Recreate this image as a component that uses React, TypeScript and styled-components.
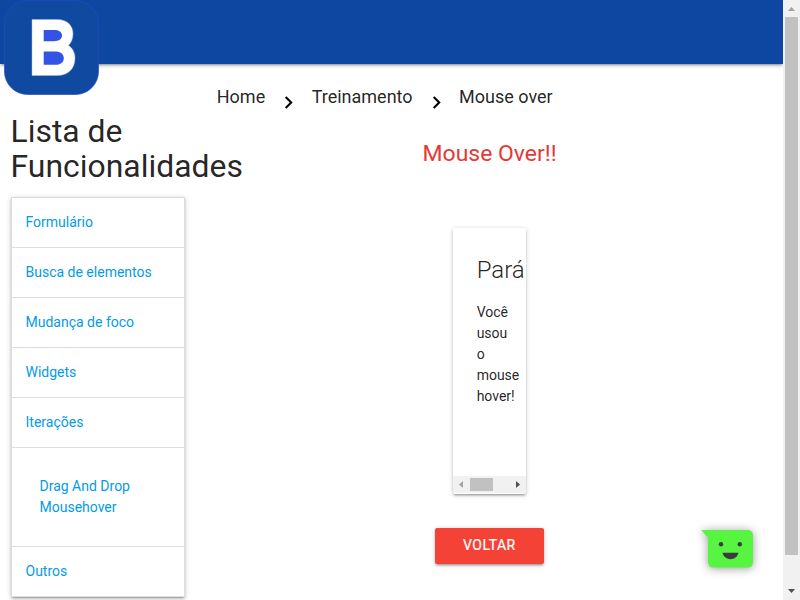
import React from "react";
import styled, { createGlobalStyle } from "styled-components";

const GlobalStyle = createGlobalStyle`
  *, *::before, *::after { box-sizing: border-box; }
  body {
    margin: 0;
    overflow: hidden;
    background: #fff;
    color: rgba(0, 0, 0, 0.87);
    font-family: Roboto, sans-serif;
    font-size: 14px;
    line-height: 1.5;
  }
  h4, h5, p, ul { margin: 0; padding: 0; font-weight: 400; }
  a { color: inherit; text-decoration: none; }
`;

const raised =
  "0 2px 2px 0 rgba(0,0,0,.14), 0 3px 1px -2px rgba(0,0,0,.12), 0 1px 5px 0 rgba(0,0,0,.2)";

const Window = styled.div`
  position: relative;
  display: flex;
  width: 800px;
  height: 600px;
  overflow: hidden;
`;
const Page = styled.div`
  width: 783px;
  height: 600px;
  overflow: hidden;
`;
const NavBar = styled.nav`
  position: relative;
  height: 64px;
  background: #0d47a1;
  box-shadow: ${raised};
`;
const Logo = styled.svg`
  position: absolute;
  left: 4px;
  top: 0;
  display: block;
`;
const Columns = styled.div`
  display: grid;
  grid-template-columns: 195.75px 1fr;
`;
const Sidebar = styled.aside`
  padding: 49.5px 10.5px 0;
`;
const Title = styled.h4`
  width: 260px;
  font-size: 31.92px;
  line-height: 35.1px;
`;
const Collapsible = styled.ul`
  list-style: none;
  margin-top: 13px;
  border: 1px solid #ddd;
  border-bottom: 0;
  box-shadow: ${raised};
  color: #039be5;
`;
const Item = styled.li<{ $open?: boolean }>`
  display: flex;
  flex-direction: column;
  padding: ${(p) => (p.$open ? 28 : 14)}px;
  border-bottom: 1px solid #ddd;
`;
const Main = styled.main`
  display: flex;
  flex-direction: column;
  align-items: center;
`;
const Breadcrumbs = styled.nav`
  display: flex;
  align-self: flex-start;
  align-items: flex-start;
  margin-left: 21px;
  height: 64px;
  padding-top: 19px;
  font-size: 18px;
  line-height: 27px;
`;
const Chevron = styled.svg`
  width: 25px;
  height: 25px;
  margin: 7px 10.2px 0 11.3px;
  fill: #000;
`;
const Heading = styled.h5`
  margin-top: 12.5px;
  padding-left: 0.4px;
  color: #e53935;
  font-size: 22.96px;
  line-height: 25.3px;
`;
const Card = styled.section`
  display: flex;
  flex-direction: column;
  width: 73px;
  height: 266px;
  margin: 62px 0 0 0.75px;
  border-radius: 2px;
  background: #fff;
  overflow: hidden;
  box-shadow: ${raised};
`;
const CardBody = styled.div`
  flex: 1;
  padding: 24px 0 0 23.4px;
`;
const CardTitle = styled.h5`
  margin-bottom: 14px;
  font-size: 24px;
  font-weight: 300;
  line-height: 36px;
`;
const CardText = styled.p`
  width: 26px;
`;
const HorizontalBar = styled.div`
  display: flex;
  align-items: center;
  height: 17px;
  margin-bottom: 1px;
  background: #f1f1f1;
`;
const Thumb = styled.div<{ $w: number; $h: number }>`
  width: ${(p) => p.$w}px;
  height: ${(p) => p.$h}px;
  background: #c1c1c1;
`;
const Arrow = styled.svg`
  display: block;
  flex: none;
  width: 17px;
  height: 17px;
`;
const EndArrow = styled(Arrow)`
  margin-left: auto;
`;
const Button = styled.a`
  height: 36px;
  margin-top: 34px;
  padding: 0 28px;
  border-radius: 2px;
  background: #f44336;
  color: #fff;
  letter-spacing: 0.5px;
  line-height: 35px;
  -webkit-text-stroke: 0.2px #fff;
  box-shadow: ${raised};
`;
const VerticalBar = styled.div`
  display: flex;
  flex-direction: column;
  align-items: center;
  justify-content: space-between;
  width: 17px;
  height: 600px;
  background: #f1f1f1;
`;
const Track = styled.div`
  flex: 1;
`;
const ChatBubble = styled.svg`
  position: absolute;
  left: 690px;
  top: 515px;
  overflow: visible;
  filter: drop-shadow(0 1px 5px rgba(0, 0, 0, 0.4));
`;

const before = ["Formulário", "Busca de elementos", "Mudança de foco", "Widgets", "Iterações"];

const Separator = () => (
  <Chevron viewBox="0 0 24 24">
    <path d="M10 6L8.59 7.41 13.17 12l-4.58 4.59L10 18l6-6z" />
  </Chevron>
);

export default function App() {
  return (
    <Window>
      <GlobalStyle />
      <Page>
        <NavBar>
          <Logo width="95" height="95" viewBox="0 0 95 95">
            <rect x=".5" y=".5" width="94" height="94" rx="23" fill="#0f4aa0" stroke="#2449c8" strokeWidth=".7" />
            <path
              d="M28 19.5H53C64 19.5 69 26 69 34C69 39 67 43 64.5 45.5C68.5 48 71 52.5 71 58C71 68 65 75.5 53 75.5H28Z"
              fill="#fff"
              stroke="#a9b4f0"
              strokeWidth=".5"
            />
            <path
              d="M39.7 30H50C55 30 58 32 58 35.5S55 41.2 50 41.2H39.7ZM39.7 51.5H51C56.5 51.5 59.8 54 59.8 58.2S56.5 64.8 51 64.8H39.7Z"
              fill="#3452e4"
            />
          </Logo>
        </NavBar>
        <Columns>
          <Sidebar>
            <Title>Lista de Funcionalidades</Title>
            <Collapsible>
              {before.map((label) => (
                <Item key={label}><a>{label}</a></Item>
              ))}
              <Item $open>
                <a>Drag And Drop</a>
                <a>Mousehover</a>
              </Item>
              <Item><a>Outros</a></Item>
            </Collapsible>
          </Sidebar>
          <Main>
            <Breadcrumbs>
              <a>Home</a>
              <Separator />
              <a>Treinamento</a>
              <Separator />
              <a>Mouse over</a>
            </Breadcrumbs>
            <Heading>Mouse Over!!</Heading>
            <Card>
              <CardBody>
                <CardTitle>Pará</CardTitle>
                <CardText>Você usou o mouse hover!</CardText>
              </CardBody>
              <HorizontalBar>
                <Arrow viewBox="0 0 17 17"><path d="M10 5v7L6 8.5z" fill="#a3a3a3" /></Arrow>
                <Thumb $w={23} $h={13} />
                <EndArrow viewBox="0 0 17 17"><path d="M7 5v7l4-3.5z" fill="#505050" /></EndArrow>
              </HorizontalBar>
            </Card>
            <Button>VOLTAR</Button>
          </Main>
        </Columns>
      </Page>
      <VerticalBar>
        <Arrow viewBox="0 0 17 17"><path d="M5 11h7L8.5 7z" fill="#a3a3a3" /></Arrow>
        <Track><Thumb $w={13} $h={538} /></Track>
        <Arrow viewBox="0 0 17 17"><path d="M5 6h7L8.5 10z" fill="#505050" /></Arrow>
      </VerticalBar>
      <ChatBubble width="75" height="65" viewBox="0 0 75 65">
        <path d="M11 15H57.5Q63 15 63 20.5V47Q63 52.5 57.5 52.5H23.5Q18 52.5 18 47V22.5Z" fill="#57f542" />
        <circle cx="31" cy="29.3" r="2.2" fill="#3b3b3b" />
        <circle cx="49.8" cy="29.3" r="2.2" fill="#3b3b3b" />
        <path d="M32.5 37.8h16c-2 8.5-14 8.5-16 0z" fill="#3b3b3b" />
      </ChatBubble>
    </Window>
  );
}
